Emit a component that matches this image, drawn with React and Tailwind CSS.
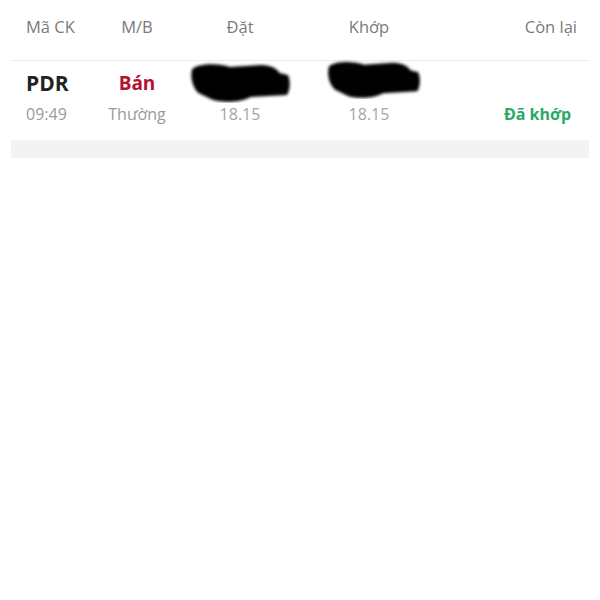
function Scribble({ className }) {
  return (
    <svg className={className} viewBox="0 0 100 44" preserveAspectRatio="none">
      <defs>
        <filter id="blur1" x="-10%" y="-10%" width="120%" height="120%">
          <feGaussianBlur stdDeviation="1.6" />
        </filter>
      </defs>
      <path
        d="M4 10 C10 4 30 4 40 8 L70 6 C80 6 86 10 88 14 L96 16 C99 22 98 32 95 36 L60 38 C50 44 30 44 22 40 L10 34 C4 28 2 18 4 10 Z"
        fill="#000"
        filter="url(#blur1)"
      />
    </svg>
  );
}

function OrderRow() {
  return (
    <div className="relative mx-[11px] mt-[5px] border-t border-[#ececec] bg-white">
      <div className="flex h-[79px] pt-[8px]">
        <div className="flex w-[89px] flex-col pl-[15px]">
          <span className="text-[21px] font-bold leading-[28px] text-[#222]">PDR</span>
          <span className="mt-[6px] text-[16px] leading-[22px] text-[#9a9a9a]">09:49</span>
        </div>
        <div className="flex w-[74px] flex-col items-center">
          <span className="text-[19px] font-bold leading-[28px] text-[#b3132f]">Bán</span>
          <span className="mt-[6px] text-[16px] leading-[22px] text-[#9a9a9a]">Thường</span>
        </div>
        <div className="flex w-[132px] flex-col items-center">
          <span className="h-[28px]" />
          <span className="mt-[6px] text-[16px] leading-[22px] text-[#a5a5a5]">18.15</span>
        </div>
        <div className="flex w-[126px] flex-col items-center">
          <span className="h-[28px]" />
          <span className="mt-[6px] text-[16px] leading-[22px] text-[#a5a5a5]">18.15</span>
        </div>
        <div className="flex flex-1 flex-col items-end pr-[18px]">
          <span className="h-[28px]" />
          <span className="mt-[6px] text-[16px] font-bold leading-[22px] text-[#2aa866]">Đã khớp</span>
        </div>
      </div>
      <div className="h-[18px] bg-[#f3f3f3]" />
      <Scribble className="absolute left-[177px] top-[-2px] h-[44px] w-[104px]" />
      <Scribble className="absolute left-[314px] top-[-4px] h-[42px] w-[97px]" />
    </div>
  );
}

export default function App() {
  return (
    <div
      className="h-[600px] w-[600px] bg-white"
      style={{ fontFamily: '"Open Sans", "Noto Sans", sans-serif' }}
    >
      <div className="flex h-[55px] items-center text-[16.5px] text-[#7a7a7a]">
        <div className="w-[100px] pl-[26px]">Mã CK</div>
        <div className="w-[74px] text-center">M/B</div>
        <div className="w-[132px] text-center">Đặt</div>
        <div className="w-[126px] text-center">Khớp</div>
        <div className="flex-1 pr-[23px] text-right">Còn lại</div>
      </div>
      <OrderRow />
    </div>
  );
}
